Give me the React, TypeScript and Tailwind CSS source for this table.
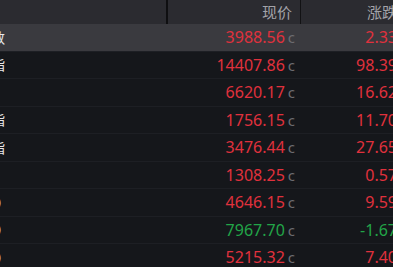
import React from "react";

type Row = { name: string; price: string; chg: string; up: boolean };

const rows: Row[] = [
  { name: "上证指数", price: "3988.56", chg: "2.33", up: true },
  { name: "深证成指", price: "14407.86", chg: "98.39", up: true },
  { name: "科创50。", price: "6620.17", chg: "16.62", up: true },
  { name: "创业板指", price: "1756.15", chg: "11.70", up: true },
  { name: "中小板指", price: "3476.44", chg: "27.65", up: true },
  { name: "上证50", price: "1308.25", chg: "0.57", up: true },
  { name: "沪深300", price: "4646.15", chg: "9.59", up: true },
  { name: "中证500", price: "7967.70", chg: "-1.67", up: false },
  { name: "中证800", price: "5215.32", chg: "7.40", up: true },
];

export default function App() {
  return (
    <div
      className="w-[393px] h-[267px] overflow-hidden bg-[#15171b]"
      style={{ fontFamily: '"Noto Sans", "Noto Sans CJK SC", sans-serif' }}
    >
      <div className="w-[410px]">
        <div className="flex h-[24px] bg-[#2b2b30] text-[15px] text-[#a3a3a9]">
          <div className="w-[166px] shrink-0" />
          <div className="w-[2px] shrink-0 bg-[#0f0f11]" />
          <div className="w-[132px] shrink-0 flex items-center justify-end pr-[8px]">现价</div>
          <div className="w-[1px] shrink-0 bg-[#121214]" />
          <div className="w-[109px] shrink-0 flex items-center justify-end pr-[13px]">涨跌</div>
        </div>
        {rows.map((r, i) => {
          const color = r.up ? "text-[#e0313d]" : "text-[#22a548]";
          return (
            <div
              key={i}
              className={
                "flex h-[27.5px] items-center border-b border-[#1d1f24] " +
                (i === 0 ? "bg-[#3a3a3f]" : "bg-[#15171b]")
              }
            >
              <div className="w-[167px] shrink-0 h-full overflow-hidden flex items-center">
                <span className="ml-[-51px] whitespace-nowrap text-[14px] text-[#e8e8ea]">{r.name}</span>
              </div>
              <div className="w-[133px] shrink-0 flex items-baseline justify-end pr-[5px]">
                <span className={"text-[16px] " + color}>{r.price}</span>
                <span className="ml-[3px] text-[15px] text-[#6c6c70]">c</span>
              </div>
              <div className="w-[110px] shrink-0 flex items-center justify-end pr-[13px]">
                <span className={"text-[16px] " + color}>{r.chg}</span>
              </div>
            </div>
          );
        })}
      </div>
    </div>
  );
}
